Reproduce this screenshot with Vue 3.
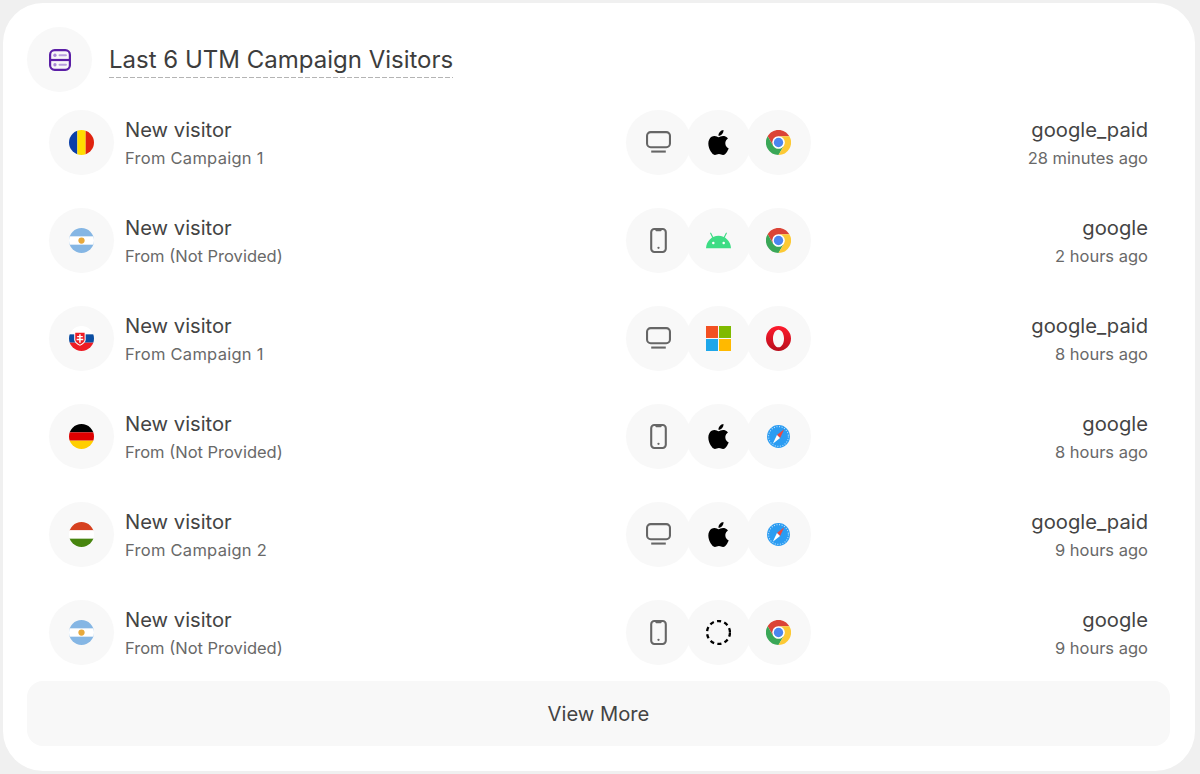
<script setup>
const visitors = [
  { flag: 'ro', from: 'From Campaign 1', device: 'desktop', os: 'apple', browser: 'chrome', source: 'google_paid', time: '28 minutes ago' },
  { flag: 'ar', from: 'From (Not Provided)', device: 'phone', os: 'android', browser: 'chrome', source: 'google', time: '2 hours ago' },
  { flag: 'sk', from: 'From Campaign 1', device: 'desktop', os: 'windows', browser: 'opera', source: 'google_paid', time: '8 hours ago' },
  { flag: 'de', from: 'From (Not Provided)', device: 'phone', os: 'apple', browser: 'safari', source: 'google', time: '8 hours ago' },
  { flag: 'hu', from: 'From Campaign 2', device: 'desktop', os: 'apple', browser: 'safari', source: 'google_paid', time: '9 hours ago' },
  { flag: 'ar', from: 'From (Not Provided)', device: 'phone', os: 'unknown', browser: 'chrome', source: 'google', time: '9 hours ago' }
]
</script>

<template>
  <div class="page">
    <section class="card">
      <header class="head">
        <div class="circle">
          <svg class="head-icon" viewBox="0 0 24 24" fill="none">
            <rect x="1.200" y="1.200" width="21.600" height="21.600" rx="5" stroke="#5b1fa6" stroke-width="2.400" />
            <path d="M1.500 12h21" stroke="#5b1fa6" stroke-width="2.400" />
            <circle cx="6.500" cy="6.800" r="1.800" fill="#a987d6" />
            <circle cx="6.500" cy="17.200" r="1.800" fill="#a987d6" />
            <path d="M11.500 6.800h7M11.500 17.200h7" stroke="#b9a0de" stroke-width="2.200" stroke-linecap="round" />
          </svg>
        </div>
        <h2 class="title">Last 6 UTM Campaign Visitors</h2>
      </header>

      <ul class="list">
        <li v-for="(v, i) in visitors" :key="i" class="row">
          <div class="who">
            <div class="circle">
              <svg class="icon round" viewBox="0 0 24 24">
                <g v-if="v.flag === 'ro'">
                  <rect width="8" height="24" fill="#0a3fa8" />
                  <rect x="8" width="8" height="24" fill="#ffdd00" />
                  <rect x="16" width="8" height="24" fill="#e0230f" />
                </g>
                <g v-else-if="v.flag === 'ar'">
                  <rect width="24" height="24" fill="#85b6e4" />
                  <rect y="8" width="24" height="8" fill="#fff" />
                  <circle cx="12" cy="12" r="3" fill="#e8a93c" />
                </g>
                <g v-else-if="v.flag === 'sk'">
                  <rect width="24" height="8" fill="#fff" />
                  <rect y="8" width="24" height="8" fill="#0b4ea2" />
                  <rect y="16" width="24" height="8" fill="#ee1c25" />
                  <path d="M5 5.500h11v7.500c0 3-2.800 4.700-5.500 6-2.700-1.300-5.500-3-5.500-6z" fill="#fff" />
                  <path d="M6 6.500h9v6.500c0 2.400-2.200 3.700-4.500 4.900-2.300-1.200-4.500-2.500-4.500-4.900z" fill="#ee1c25" />
                  <path d="M9.800 8h1.400v1.600h2v1.300h-2v1.400h2.500v1.300h-2.500v2.400h-1.400v-2.400h-2.500v-1.300h2.500v-1.400h-2v-1.300h2z" fill="#fff" />
                </g>
                <g v-else-if="v.flag === 'de'">
                  <rect width="24" height="8" fill="#000" />
                  <rect y="8" width="24" height="8" fill="#dd0000" />
                  <rect y="16" width="24" height="8" fill="#ffce00" />
                </g>
                <g v-else>
                  <rect width="24" height="8" fill="#d6401f" />
                  <rect y="8" width="24" height="8" fill="#fff" />
                  <rect y="16" width="24" height="8" fill="#47850f" />
                </g>
              </svg>
            </div>
            <div class="text">
              <div class="name">New visitor</div>
              <div class="sub" :class="{ campaign: v.from.includes('Campaign') }">{{ v.from }}</div>
            </div>
          </div>

          <div class="tech">
            <div class="circle">
              <svg v-if="v.device === 'desktop'" class="icon" viewBox="0 0 24 24" fill="none" stroke="#666">
                <rect x="1" y="2" width="22" height="14.500" rx="3.500" stroke-width="2" />
                <path d="M5 20.700h14" stroke-width="2" />
              </svg>
              <svg v-else class="icon" viewBox="0 0 24 24" fill="none">
                <rect x="5" y="1" width="14" height="22" rx="3" stroke="#666" stroke-width="2" />
                <path d="M9 1h6v1.200a1 1 0 0 1-1 1h-4a1 1 0 0 1-1-1z" fill="#666" />
                <circle cx="12" cy="19" r="1.100" fill="#666" />
              </svg>
            </div>
            <div class="circle">
              <svg v-if="v.os === 'apple'" class="icon" viewBox="0 0 24 24" fill="#000">
                <path d="M12.152 6.896c-.948 0-2.415-1.078-3.96-1.04-2.04.027-3.91 1.183-4.961 3.014-2.117 3.675-.546 9.103 1.519 12.09 1.013 1.454 2.208 3.09 3.792 3.039 1.52-.065 2.09-.987 3.935-.987 1.831 0 2.35.987 3.96.948 1.637-.026 2.676-1.48 3.676-2.948 1.156-1.688 1.636-3.325 1.662-3.415-.039-.013-3.182-1.221-3.22-4.857-.026-3.04 2.48-4.494 2.597-4.559-1.429-2.09-3.623-2.324-4.39-2.376-2-.156-3.675 1.09-4.61 1.09zM15.530 3.830c.843-1.012 1.400-2.427 1.245-3.830-1.207.052-2.662.805-3.532 1.818-.78.896-1.454 2.338-1.273 3.714 1.338.104 2.715-.688 3.559-1.701" />
              </svg>
              <svg v-else-if="v.os === 'android'" class="icon" viewBox="0 0 24 24">
                <path d="M0 19.500C.3 12.800 5.500 7.500 12 7.500s11.700 5.300 12 12z" fill="#3ddc84" />
                <path d="M6.800 9.500 4.500 5M17.200 9.500 19.500 5" stroke="#3ddc84" stroke-width="1.100" stroke-linecap="round" />
                <circle cx="7" cy="14.500" r="1.200" fill="#fff" />
                <circle cx="17" cy="14.500" r="1.200" fill="#fff" />
              </svg>
              <svg v-else-if="v.os === 'windows'" class="icon" viewBox="0 0 24 24">
                <rect width="11.500" height="11.500" fill="#f25022" />
                <rect x="12.500" width="11.500" height="11.500" fill="#7fba00" />
                <rect y="12.500" width="11.500" height="11.500" fill="#1ea7ea" />
                <rect x="12.500" y="12.500" width="11.500" height="11.500" fill="#ffb900" />
              </svg>
              <svg v-else class="icon" viewBox="0 0 24 24" fill="none">
                <circle cx="12" cy="12" r="11" stroke="#000" stroke-width="2.200" stroke-dasharray="4 3.150" />
              </svg>
            </div>
            <div class="circle">
              <svg v-if="v.browser === 'chrome'" class="icon" viewBox="0 0 24 24">
                <path d="M12 0C7.600 0 3.700 2.400 1.600 6l5.200 9A6 6 0 0 1 12 6h10.400C20.300 2.400 16.400 0 12 0z" fill="#db4437" />
                <path d="M1.600 6A12 12 0 0 0 12 24l5.200-9a6 6 0 0 1-10.400 0z" fill="#3aa757" />
                <path d="M22.400 6H12a6 6 0 0 1 5.200 9L12 24A12 12 0 0 0 22.400 6z" fill="#fcc934" />
                <circle cx="12" cy="12" r="5.600" fill="#fff" />
                <circle cx="12" cy="12" r="4.500" fill="#4b86f0" />
              </svg>
              <svg v-else-if="v.browser === 'opera'" class="icon" viewBox="0 0 24 24">
                <defs>
                  <linearGradient id="opera-red" x1="0" y1="0" x2="0" y2="1">
                    <stop offset="0" stop-color="#ff1b2d" />
                    <stop offset="1" stop-color="#b80e1c" />
                  </linearGradient>
                </defs>
                <path fill-rule="evenodd" d="M12 0a12 12 0 1 0 0 24 12 12 0 0 0 0-24zm0 3.500c3 0 5.300 3.800 5.300 8.500s-2.300 8.500-5.300 8.500-5.300-3.800-5.300-8.500 2.300-8.500 5.300-8.500z" fill="url(#opera-red)" />
              </svg>
              <svg v-else class="icon" viewBox="0 0 24 24">
                <circle cx="12" cy="12" r="11" fill="#2b9cf2" />
                <circle cx="12" cy="12" r="9.500" fill="none" stroke="#bfe2fb" stroke-width="1" stroke-dasharray="1 1.500" />
                <path d="M17.500 5 10.500 10.500 13.500 13.500z" fill="#f0483e" />
                <path d="M6.500 19 10.500 10.500 13.500 13.500z" fill="#fff" />
              </svg>
            </div>
          </div>

          <div class="meta">
            <div class="name">{{ v.source }}</div>
            <div class="sub">{{ v.time }}</div>
          </div>
        </li>
      </ul>

      <button class="more" type="button">View More</button>
    </section>
  </div>
</template>

<style>
body {
  background: #f0f0f0;
}
</style>

<style scoped>
.page {
  box-sizing: border-box;
  height: 774px;
  padding: 3px 5px 3px 3px;
  font-family: Inter, "Liberation Sans", sans-serif;
  overflow: hidden;
}

.card {
  box-sizing: border-box;
  height: 768px;
  padding: 24px 25px 25px 24px;
  background: #fff;
  border-radius: 40px;
  display: flex;
  flex-direction: column;
}

.head {
  display: flex;
  align-items: center;
  gap: 17px;
  height: 65px;
}

.circle {
  flex: none;
  width: 65px;
  height: 65px;
  border-radius: 50%;
  background: #f8f8f8;
  display: flex;
  align-items: center;
  justify-content: center;
}

.icon {
  width: 25px;
  height: 25px;
  display: block;
}

.round {
  border-radius: 50%;
}

.head-icon {
  width: 22px;
  height: 22px;
  display: block;
}

.title {
  margin: 0;
  padding-bottom: 1px;
  font-size: 24px;
  font-weight: 400;
  line-height: 35px;
  color: #3d3d3d;
  background: repeating-linear-gradient(90deg, #b4b4b4 0 5px, transparent 5px 7px) left bottom / 100% 1px no-repeat;
}

.list {
  list-style: none;
  margin: 18px 0 0;
  padding: 0 22px;
  display: flex;
  flex-direction: column;
  gap: 33px;
}

.row {
  display: grid;
  grid-template-columns: 577px 185px 1fr;
  height: 65px;
}

.who {
  display: flex;
  align-items: center;
  gap: 11px;
}

.text,
.meta {
  align-self: center;
  padding-top: 2px;
}

.meta {
  text-align: right;
}

.name {
  font-size: 20.2px;
  line-height: 28px;
  color: #444;
}

.sub {
  font-size: 16.500px;
  line-height: 28px;
  color: #696969;
}

.campaign {
  letter-spacing: 0.27px;
}

.tech {
  display: flex;
}

.tech .circle + .circle {
  margin-left: -5px;
}

.more {
  margin-top: 16px;
  height: 65px;
  border: 0;
  border-radius: 16px;
  background: #f8f8f8;
  font-family: inherit;
  font-size: 20.2px;
  color: #444;
}
</style>
